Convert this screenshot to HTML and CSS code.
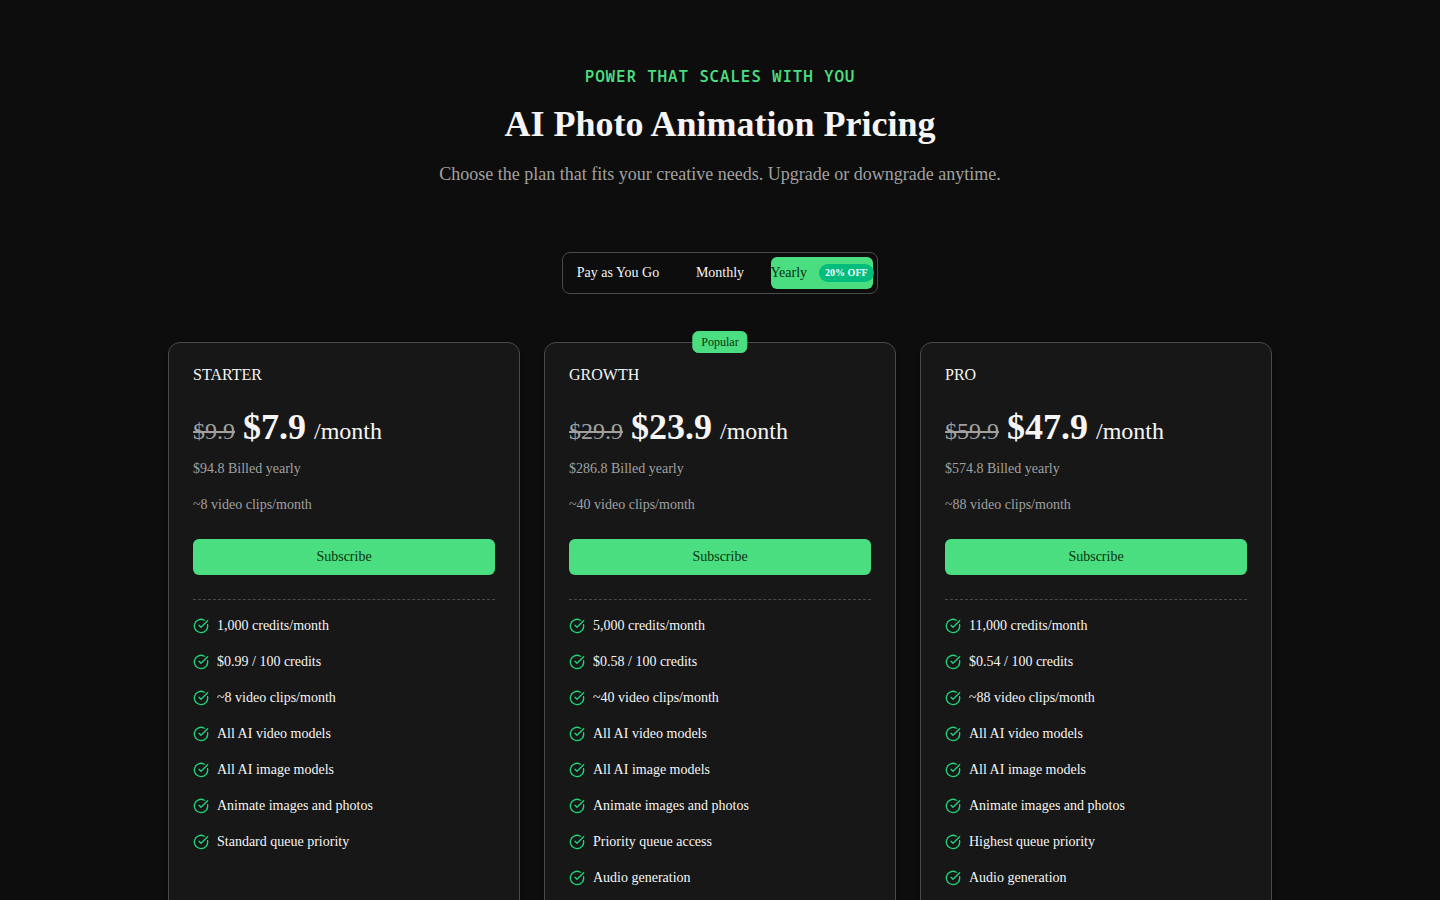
FILE: index.html
```html
<!DOCTYPE html>
<html lang="en">
<head>
    <meta charset="UTF-8">
    <meta name="viewport" content="width=device-width, initial-scale=1.0">
    <title>AI Photo Animation Pricing</title>
    <link rel="stylesheet" href="styles.css">
</head>
<body>
    <!-- Shared check icon -->
    <svg class="sprite" aria-hidden="true">
        <symbol id="check" viewBox="0 0 24 24">
            <path d="M21.801 10A10 10 0 1 1 17 3.335"/>
            <path d="m9 11 3 3L22 4"/>
        </symbol>
    </svg>

    <main class="pricing">
        <header class="pricing-header">
            <p class="eyebrow">Power that scales with you</p>
            <h1>AI Photo Animation Pricing</h1>
            <p class="subtitle">Choose the plan that fits your creative needs. Upgrade or downgrade anytime.</p>
        </header>

        <div class="billing-toggle">
            <button type="button">Pay as You Go</button>
            <button type="button">Monthly</button>
            <button type="button" class="active">Yearly <span class="discount">20% OFF</span></button>
        </div>

        <div class="plans">
            <section class="plan">
                <h2>STARTER</h2>
                <p class="price"><s>$9.9</s> <strong>$7.9</strong> <span>/month</span></p>
                <p class="note">$94.8 Billed yearly</p>
                <p class="note clips">~8 video clips/month</p>
                <button type="button" class="subscribe">Subscribe</button>
                <ul class="features">
                    <li><svg><use href="#check"/></svg>1,000 credits/month</li>
                    <li><svg><use href="#check"/></svg>$0.99 / 100 credits</li>
                    <li><svg><use href="#check"/></svg>~8 video clips/month</li>
                    <li><svg><use href="#check"/></svg>All AI video models</li>
                    <li><svg><use href="#check"/></svg>All AI image models</li>
                    <li><svg><use href="#check"/></svg>Animate images and photos</li>
                    <li><svg><use href="#check"/></svg>Standard queue priority</li>
                </ul>
            </section>

            <section class="plan">
                <span class="popular">Popular</span>
                <h2>GROWTH</h2>
                <p class="price"><s>$29.9</s> <strong>$23.9</strong> <span>/month</span></p>
                <p class="note">$286.8 Billed yearly</p>
                <p class="note clips">~40 video clips/month</p>
                <button type="button" class="subscribe">Subscribe</button>
                <ul class="features">
                    <li><svg><use href="#check"/></svg>5,000 credits/month</li>
                    <li><svg><use href="#check"/></svg>$0.58 / 100 credits</li>
                    <li><svg><use href="#check"/></svg>~40 video clips/month</li>
                    <li><svg><use href="#check"/></svg>All AI video models</li>
                    <li><svg><use href="#check"/></svg>All AI image models</li>
                    <li><svg><use href="#check"/></svg>Animate images and photos</li>
                    <li><svg><use href="#check"/></svg>Priority queue access</li>
                    <li><svg><use href="#check"/></svg>Audio generation</li>
                </ul>
            </section>

            <section class="plan">
                <h2>PRO</h2>
                <p class="price"><s>$59.9</s> <strong>$47.9</strong> <span>/month</span></p>
                <p class="note">$574.8 Billed yearly</p>
                <p class="note clips">~88 video clips/month</p>
                <button type="button" class="subscribe">Subscribe</button>
                <ul class="features">
                    <li><svg><use href="#check"/></svg>11,000 credits/month</li>
                    <li><svg><use href="#check"/></svg>$0.54 / 100 credits</li>
                    <li><svg><use href="#check"/></svg>~88 video clips/month</li>
                    <li><svg><use href="#check"/></svg>All AI video models</li>
                    <li><svg><use href="#check"/></svg>All AI image models</li>
                    <li><svg><use href="#check"/></svg>Animate images and photos</li>
                    <li><svg><use href="#check"/></svg>Highest queue priority</li>
                    <li><svg><use href="#check"/></svg>Audio generation</li>
                </ul>
            </section>
        </div>
    </main>
</body>
</html>
```
FILE: styles.css
```css
* {
    margin: 0;
    padding: 0;
    box-sizing: border-box;
}

body {
    font-family: 'Liberation Serif', 'Times New Roman', serif;
    font-size: 14px;
    line-height: 20px;
    background: #0d0d0d;
    color: #f5f5f5;
}

button {
    font: inherit;
    color: inherit;
    border: none;
    background: none;
    cursor: pointer;
}

.sprite {
    position: absolute;
    width: 0;
    height: 0;
}

.pricing {
    max-width: 1152px;
    margin: 0 auto;
    padding: 64px 24px;
    display: flex;
    flex-direction: column;
    align-items: center;
}

.pricing-header {
    display: flex;
    flex-direction: column;
    gap: 16px;
    margin-bottom: 64px;
    text-align: center;
}

.eyebrow {
    font-family: 'Noto Sans Mono', 'DejaVu Sans Mono', monospace;
    font-size: 16px;
    line-height: 24px;
    font-weight: 600;
    letter-spacing: 0.05em;
    text-transform: uppercase;
    color: #4ade80;
}

h1 {
    font-size: 36px;
    line-height: 40px;
}

.subtitle {
    font-size: 18px;
    line-height: 28px;
    color: #a1a1a1;
}

/* Billing period */
.billing-toggle {
    display: grid;
    grid-template-columns: repeat(3, 102px);
    padding: 4px;
    margin-bottom: 48px;
    border: 1px solid #4a4a4a;
    border-radius: 8px;
}

.billing-toggle button {
    display: flex;
    align-items: center;
    justify-content: center;
    gap: 12px;
    height: 32px;
    border-radius: 6px;
    white-space: nowrap;
}

.billing-toggle .active {
    background: #4ade80;
    color: #0a3311;
}

.discount {
    padding: 0 6px;
    border-radius: 9px;
    background: #00bc7d;
    color: #fff;
    font-size: 10px;
    line-height: 18px;
    font-weight: bold;
}

/* Plan cards */
.plans {
    display: grid;
    grid-template-columns: repeat(3, 1fr);
    gap: 24px;
    width: 100%;
}

.plan {
    position: relative;
    padding: 24px;
    background: #171717;
    border: 1px solid #4a4a4a;
    border-radius: 12px;
    box-shadow: 0 1px 3px rgba(0,0,0,0.3);
}

.popular {
    position: absolute;
    top: -12px;
    left: 50%;
    transform: translateX(-50%);
    padding: 2px 8px;
    border: 1px solid #4ade80;
    border-radius: 6px;
    background: #4ade80;
    color: #0a3311;
    font-size: 12px;
    line-height: 16px;
}

.plan h2 {
    font-size: 16px;
    line-height: 16px;
    font-weight: normal;
    margin-bottom: 24px;
}

.price {
    display: flex;
    align-items: baseline;
    gap: 8px;
    margin-bottom: 12px;
    font-size: 24px;
    line-height: 32px;
}

.price s {
    color: #a1a1a1;
}

.price strong {
    font-size: 36px;
    line-height: 40px;
}

.note {
    color: #a1a1a1;
}

.clips {
    margin: 16px 0 24px;
}

.subscribe {
    width: 100%;
    height: 36px;
    border-radius: 6px;
    background: #4ade80;
    color: #0a3311;
}

.features {
    display: flex;
    flex-direction: column;
    gap: 16px;
    margin-top: 24px;
    padding-top: 16px;
    border-top: 1px dashed #4a4a4a;
    list-style: none;
}

.features li {
    display: flex;
    align-items: center;
    gap: 8px;
}

.features svg {
    width: 16px;
    height: 16px;
    fill: none;
    stroke: #1fd67a;
    stroke-width: 2;
    stroke-linecap: round;
    stroke-linejoin: round;
}

@media (max-width: 900px) {
    .plans {
        grid-template-columns: 1fr;
    }
}
```
